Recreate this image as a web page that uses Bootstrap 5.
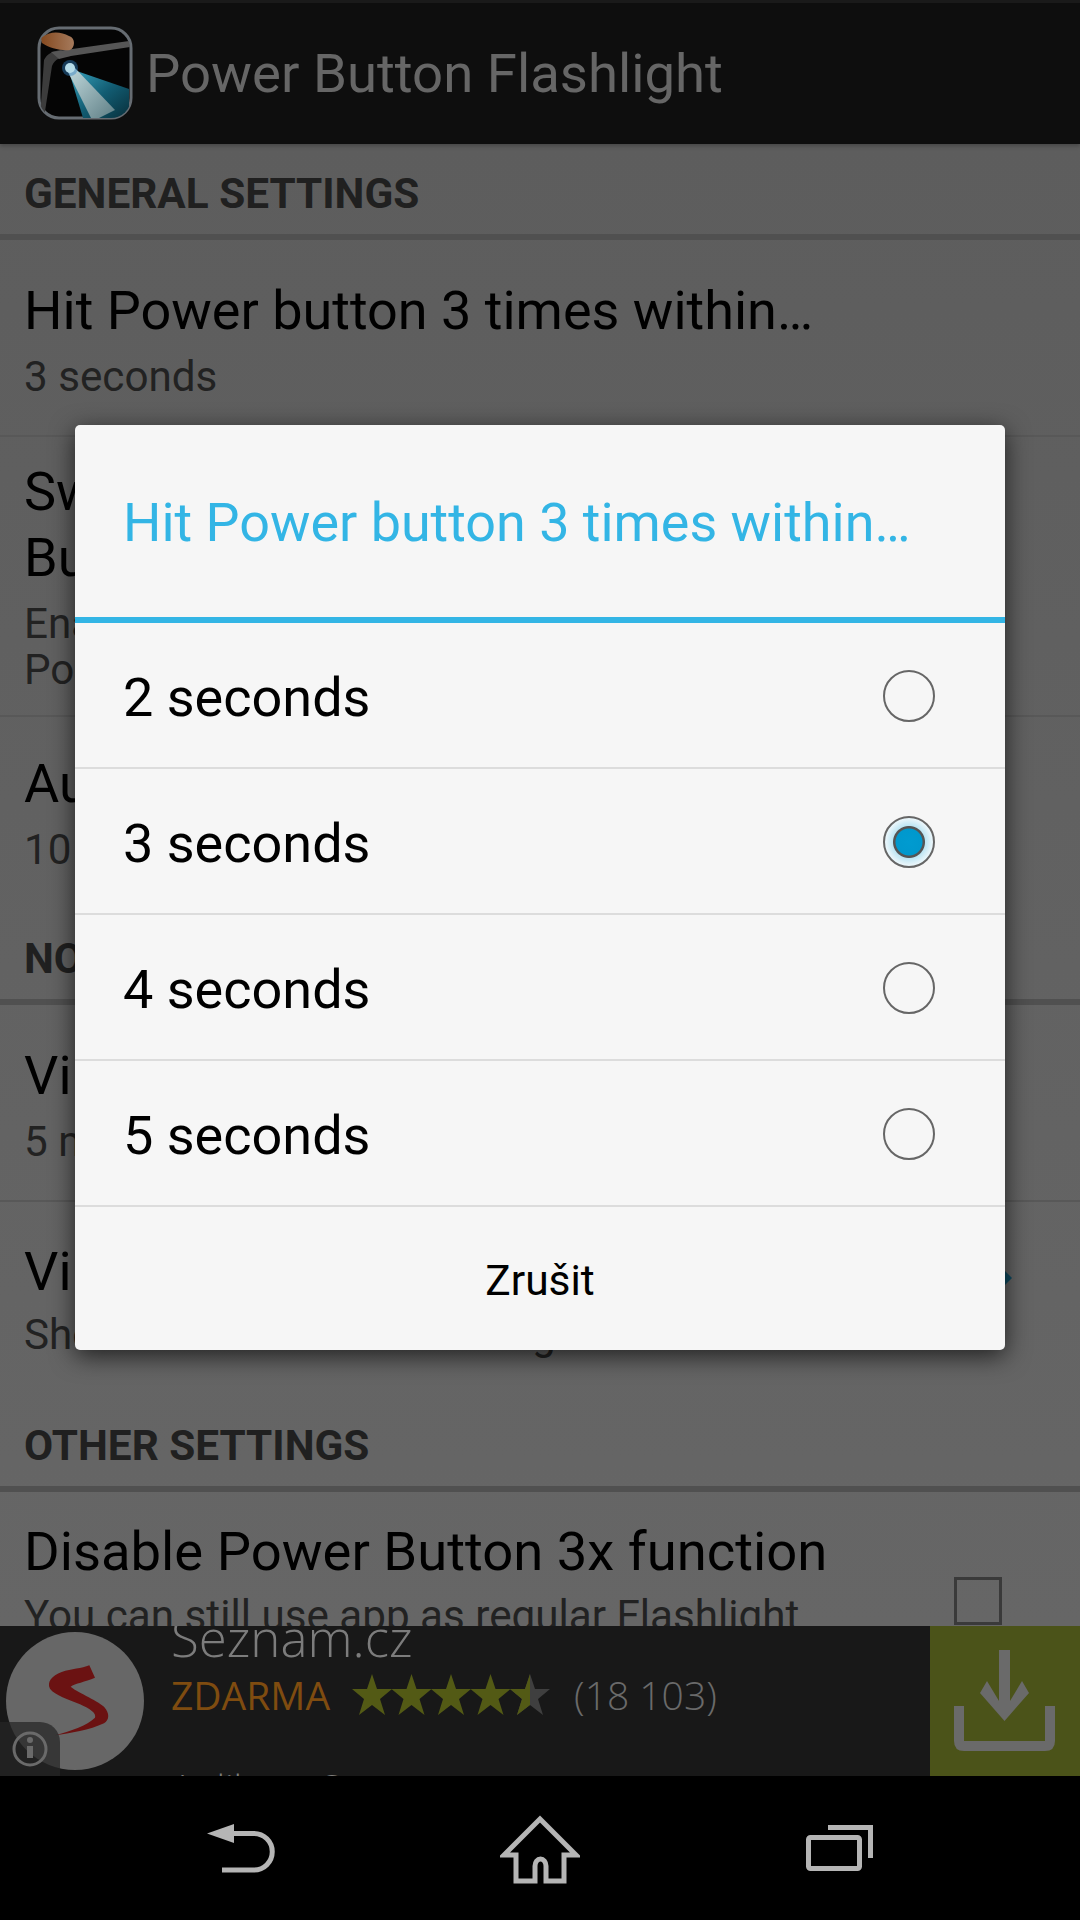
<!DOCTYPE html>
<html lang="en">
<head>
  <meta charset="UTF-8">
  <title>Power Button Flashlight</title>
  <meta name="viewport" content="width=device-width, initial-scale=1">
  <link href="https://cdn.jsdelivr.net/npm/bootstrap@5.3.0/dist/css/bootstrap.min.css" rel="stylesheet">
  <style>
    body { background: #000; font-family: Roboto, sans-serif; }
    .phone-screen { width: 1080px; height: 1920px; overflow: hidden; position: relative; }

    /* action bar */
    .app-bar { height: 144px; flex: none; background: #0e0e0e; border-top: 3px solid #1a1a1a; padding-left: 37px; box-shadow: 0 2px 4px rgba(0,0,0,.25); position: relative; z-index: 1; }
    .app-title { color: #666; font-size: 54.500px; margin-left: 13px; }

    /* settings list, already dimmed by the dialog scrim */
    .pref-list { flex: 1 1 0; min-height: 0; overflow: hidden; background: linear-gradient(#5d5d5d, #666); }
    .pref-section { height: 96px; padding: 0 24px; line-height: 100px; font-size: 42.300px; font-weight: 700; color: #202020; border-bottom: 6px solid #505050; white-space: nowrap; }
    .pref-row { background: transparent; border: 0; border-radius: 0; padding: 0 24px; color: #000; }
    .pref-row.with-line { border-bottom: 2px solid #585858; }
    .pref-name { font-size: 54px; line-height: 66px; white-space: nowrap; }
    .pref-sub { font-size: 42.200px; line-height: 46px; margin-top: 10px; color: #222; white-space: nowrap; }
    .h-197 { height: 197px; padding-top: 38px; }
    .h-280 { height: 280px; padding-top: 22px; }
    .h-192 { height: 192px; padding-top: 34px; }
    .h-194 { height: 194px; padding-top: 37px; }
    .h-194 .pref-sub { margin-top: 7px; }
    .h-last { height: 200px; padding-top: 27px; }
    .h-last .pref-sub { margin-top: 8px; }
    .h-last .pref-name { font-size: 54.400px; }
    .chevron-mark { position: absolute; left: 1005px; top: 69px; width: 8px; height: 14px; }
    .empty-check { width: 48px; height: 48px; border: 3px solid #3a3a3a; position: absolute; left: 954px; top: 85px; }

    /* ad strip */
    .ad-strip { height: 150px; flex: none; background: #181818; overflow: hidden; position: relative; }
    .ad-logo { width: 240px; flex: none; }
    .ad-copy { padding-left: 171px; margin-left: -240px; font-family: "Open Sans", sans-serif; white-space: nowrap; }
    .ad-name { font-size: 51px; font-weight: 300; line-height: 60px; margin-top: -19px; color: #7c7c7c; }
    .ad-price { font-size: 39px; color: #7f4c10; line-height: 50px; margin-top: 3px; }
    .ad-count { font-size: 39px; font-weight: 300; color: #6a6a6a; margin-left: 22px; }
    .ad-stars { margin-left: 22px; }
    .ad-more { font-size: 38px; font-weight: 300; color: #7c7c7c; line-height: 50px; margin-top: 43px; }
    .ad-install { width: 150px; height: 150px; flex: none; background: #4b5319; margin-left: auto; }

    /* system navigation */
    .sys-nav { height: 144px; flex: none; background: #000; gap: 220px; }

    /* dialog */
    .pick-dialog { position: absolute; left: 75px; top: 425px; width: 930px; height: 925px; background: #f6f6f6; border-radius: 5px; box-shadow: 0 6px 24px rgba(0,0,0,.68); }
    .pick-title { height: 198px; flex: none; border-bottom: 6px solid #33b5e5; color: #33b5e5; font-size: 53.900px; padding-left: 48px; padding-top: 4px; white-space: nowrap; }
    .pick-dialog .list-group .pick-row { height: 146px; background: transparent; border: 0; border-bottom: 2px solid #dcdcdc; border-radius: 0; padding: 5px 48px 0; font-size: 54px; color: #000; margin: 0; }
    .pick-row .form-check-input { width: 52px; height: 52px; margin: 0 22px 4px 0; border: 2.5px solid #666; background-color: #f6f6f6; float: none; flex: none; }
    .pick-row .form-check-input:checked { border-color: #666; background-color: #f6f6f6; background-image: radial-gradient(circle, #009bd0 0, #0098cd 13px, #555 14px, #555 15.5px, #bfe6f4 16.5px, #e8f5fa 23px); }
    .pick-cancel { height: 143px; font-size: 42.500px; color: #000; background: transparent; border: 0; border-radius: 0; width: 100%; padding: 4px 0 0; }
  </style>
</head>
<body>
  <div class="phone-screen d-flex flex-column">
    <header class="app-bar d-flex align-items-center">
      <svg width="96" height="96" viewBox="0 0 96 96">
        <defs>
          <linearGradient id="beamFill" x1="0" y1="0" x2="1" y2="1">
            <stop offset="0" stop-color="#3aa8c4"/>
            <stop offset=".55" stop-color="#125c72"/>
            <stop offset="1" stop-color="#08303c"/>
          </linearGradient>
          <linearGradient id="beamCore" x1="0" y1="0" x2="1" y2="1">
            <stop offset="0" stop-color="#c4dcdf"/>
            <stop offset="1" stop-color="#5f7f86"/>
          </linearGradient>
          <linearGradient id="fingerFill" x1="0" y1="0" x2="1" y2="0">
            <stop offset="0" stop-color="#85491f"/>
            <stop offset="1" stop-color="#a57a5c"/>
          </linearGradient>
          <clipPath id="iconClip"><rect x="2" y="2" width="92" height="90" rx="20"/></clipPath>
        </defs>
        <rect x="2" y="2" width="92" height="90" rx="20" fill="#050505" stroke="#666c72" stroke-width="3"/>
        <g clip-path="url(#iconClip)">
          <path d="M7 34 C10 28 15 25 24 24 L34 30 C24 30 18 33 15 40 L7 92 L3 92 Z" fill="#3c3c3c"/>
          <path d="M14 26 L92 15 L93 21 L34 30 L22 33 Z" fill="#565656"/>
          <path d="M31 42 L92 63 L92 92 L46 92 Z" fill="url(#beamFill)"/>
          <path d="M29 42 L37 41 L78 84 L62 92 L54 92 Z" fill="url(#beamCore)"/>
          <circle cx="33" cy="42" r="8" fill="#2c7fc0" fill-opacity=".45"/>
          <circle cx="33" cy="42" r="5" fill="#b5dbe8"/>
          <path d="M4 12 C14 4 24 6 32 10 C39 12 38 22 33 24 C24 25 12 22 5 17 Z" fill="url(#fingerFill)"/>
        </g>
      </svg>
      <span class="app-title">Power Button Flashlight</span>
    </header>

    <main class="pref-list">
      <div class="pref-section">GENERAL SETTINGS</div>
      <div class="list-group list-group-flush">
        <div class="list-group-item pref-row with-line h-197">
          <div class="pref-name">Hit Power button 3 times within…</div>
          <div class="pref-sub">3 seconds</div>
        </div>
        <div class="list-group-item pref-row with-line h-280">
          <div class="pref-name">Switch off flashlight with Power<br>Button</div>
          <div class="pref-sub">Enable to turn off flashlight with<br>Power button</div>
        </div>
        <div class="list-group-item pref-row h-192">
          <div class="pref-name">Auto turn off</div>
          <div class="pref-sub">10 minutes</div>
        </div>
      </div>
      <div class="pref-section">NOTIFICATION SETTINGS</div>
      <div class="list-group list-group-flush">
        <div class="list-group-item pref-row with-line h-197">
          <div class="pref-name">Vibrate duration</div>
          <div class="pref-sub">5 milliseconds</div>
        </div>
        <div class="list-group-item pref-row h-194">
          <div class="pref-name">Vibrate on start</div>
          <div class="pref-sub">Short vibration when flashlight</div>
          <svg class="chevron-mark" viewBox="0 0 8 14"><path d="M0 0 L7 7 L0 14 Z" fill="#0e4a60"/></svg>
        </div>
      </div>
      <div class="pref-section">OTHER SETTINGS</div>
      <div class="list-group list-group-flush">
        <div class="list-group-item pref-row h-last">
          <div class="pref-name">Disable Power Button 3x function</div>
          <div class="pref-sub">You can still use app as regular Flashlight</div>
          <span class="empty-check"></span>
        </div>
      </div>
    </main>

    <aside class="ad-strip d-flex">
      <svg class="ad-logo" width="240" height="150" viewBox="0 0 720 450">
        <circle cx="225" cy="225" r="207" fill="#676767"/>
        <path d="M268 118 L285 155 C255 168 225 172 212 182 C225 195 290 222 312 242 C330 262 328 282 312 292 C270 312 210 322 165 328 C210 316 262 298 285 275 C290 262 270 248 240 235 C205 220 165 208 150 188 C140 168 155 150 185 138 C215 128 245 128 268 118 Z" fill="#6b1212"/>
        <path d="M0 288 H120 A60 60 0 0 1 180 348 V450 H0 Z" fill="#262626" fill-opacity=".72"/>
        <circle cx="90" cy="369" r="48" fill="none" stroke="#6a6a6a" stroke-width="9"/>
        <circle cx="90" cy="342" r="9" fill="#6a6a6a"/>
        <rect x="81" y="360" width="18" height="36" fill="#6a6a6a"/>
      </svg>
      <div class="ad-copy">
        <div class="ad-name">Seznam.cz</div>
        <div class="ad-price d-flex align-items-center">ZDARMA
          <svg class="ad-stars" width="200" height="42" viewBox="0 0 200 42">
            <defs>
              <path id="adStar" d="M20 0 L25 15 L40 15 L28 25 L33 41 L20 31 L7 41 L12 25 L0 15 L15 15 Z"/>
              <clipPath id="starHalf"><rect x="158" y="0" width="20" height="42"/></clipPath>
            </defs>
            <g fill="#535a15">
              <use href="#adStar"/>
              <use href="#adStar" x="39.500"/>
              <use href="#adStar" x="79"/>
              <use href="#adStar" x="118.500"/>
            </g>
            <use href="#adStar" x="158" fill="#3f3f3f"/>
            <g clip-path="url(#starHalf)"><use href="#adStar" x="158" fill="#535a15"/></g>
          </svg>
          <span class="ad-count">(18 103)</span>
        </div>
        <div class="ad-more">Aplikace Seznam</div>
      </div>
      <div class="ad-install">
        <svg width="150" height="150" viewBox="0 0 150 150">
          <path d="M69 24 H80 V75 L92 55 L99 67 L74.500 95 L50 67 L57 55 L69 75 Z" fill="#6a6a6a"/>
          <path d="M24 80 H34 V115 H115 V80 H125 V115 Q125 125 115 125 H34 Q24 125 24 115 Z" fill="#6a6a6a"/>
        </svg>
      </div>
    </aside>

    <nav class="sys-nav d-flex justify-content-center">
      <svg width="80" height="144" viewBox="200 1776 80 144" fill="none" stroke="#b5b5b5" stroke-width="5">
        <path d="M232 1833.500 H254 A18 18 0 0 1 254 1870 H222"/>
        <path d="M207 1833.500 L234 1824 V1843 Z" fill="#b5b5b5" stroke="none"/>
      </svg>
      <svg width="80" height="144" viewBox="500 1776 80 144" fill="none" stroke="#b5b5b5" stroke-width="5">
        <path d="M540 1819 L504 1855 H516 V1881 H535 V1866 A5.500 7 0 0 1 546 1866 V1881 H564 V1855 H576 Z"/>
      </svg>
      <svg width="80" height="144" viewBox="801 1776 80 144" fill="none" stroke="#b5b5b5" stroke-width="5">
        <rect x="809.500" y="1837.500" width="51" height="31" rx="2"/>
        <path d="M829 1827.500 H871.500 V1858"/>
      </svg>
    </nav>

    <div class="pick-dialog d-flex flex-column">
      <div class="pick-title d-flex align-items-center">Hit Power button 3 times within…</div>
      <div class="list-group list-group-flush">
        <label class="list-group-item pick-row d-flex align-items-center justify-content-between">2 seconds <input class="form-check-input" type="radio" name="hitWindow"></label>
        <label class="list-group-item pick-row d-flex align-items-center justify-content-between">3 seconds <input class="form-check-input" type="radio" name="hitWindow" checked></label>
        <label class="list-group-item pick-row d-flex align-items-center justify-content-between">4 seconds <input class="form-check-input" type="radio" name="hitWindow"></label>
        <label class="list-group-item pick-row d-flex align-items-center justify-content-between">5 seconds <input class="form-check-input" type="radio" name="hitWindow"></label>
      </div>
      <button type="button" class="btn pick-cancel">Zrušit</button>
    </div>
  </div>

  <script src="https://cdn.jsdelivr.net/npm/bootstrap@5.3.0/dist/js/bootstrap.bundle.min.js"></script>
</body>
</html>
